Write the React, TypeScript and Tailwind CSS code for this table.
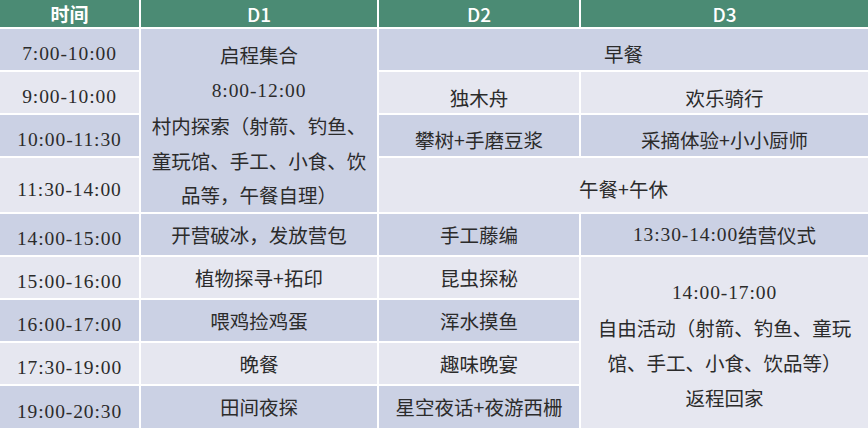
import { type ReactNode } from "react";

/* Camp schedule table — 3 days, time slots down the left */

const CJK = "font-['Noto_Sans_CJK_SC',sans-serif]";
const SERIF = "font-['Liberation_Serif','Noto_Sans_CJK_SC',serif] tracking-[0.9px]";

function Head({ children, bold = false }: { children: ReactNode; bold?: boolean }) {
  return (
    <div
      className={`flex items-center justify-center bg-[#4b8b74] text-white text-[19px] leading-none ${CJK} ${
        bold ? "font-bold" : "font-medium"
      }`}
    >
      {children}
    </div>
  );
}

function Cell({
  children,
  dark,
  className = "pt-[8px]",
  serif = false,
}: {
  children: ReactNode;
  dark: boolean;
  className?: string;
  serif?: boolean;
}) {
  return (
    <div
      className={`flex items-center justify-center text-center text-[19.5px] leading-none text-[#2b2b2b] ${
        dark ? "bg-[#cbd1e4]" : "bg-[#e6e7f0]"
      } ${serif ? SERIF : CJK} ${className}`}
    >
      {children}
    </div>
  );
}

function Time({ children }: { children: ReactNode }) {
  return <span className={SERIF}>{children}</span>;
}

const TIMES = [
  "7:00-10:00",
  "9:00-10:00",
  "10:00-11:30",
  "11:30-14:00",
  "14:00-15:00",
  "15:00-16:00",
  "16:00-17:00",
  "17:30-19:00",
  "19:00-20:30",
];

export default function App() {
  return (
    <div className="w-[868px] h-[428px] overflow-hidden bg-white">
      <div className="grid grid-cols-[139px_236px_200px_287px] grid-rows-[27px_41px_41px_41px_54px_41px_41px_41px_41px_42px] gap-[2px]">
        <Head bold>时间</Head>
        <Head>D1</Head>
        <Head>D2</Head>
        <Head>D3</Head>

        {/* time column */}
        {TIMES.map((t, i) => (
          <Cell key={t} dark={i % 2 === 0} serif className="col-start-1 pt-[9px]">
            {t}
          </Cell>
        ))}

        {/* D1 morning block */}
        <Cell dark className="col-start-2 row-start-2 row-span-4 flex-col !justify-start pt-[8px]">
          <div className="h-[36px] flex items-center">启程集合</div>
          <div className="h-[36px] flex items-center">
            <Time>8:00-12:00</Time>
          </div>
          <div className="h-[34px] flex items-center">村内探索（射箭、钓鱼、</div>
          <div className="h-[36px] flex items-center">童玩馆、手工、小食、饮</div>
          <div className="h-[32px] flex items-center">品等，午餐自理）</div>
        </Cell>

        {/* D2 / D3 morning */}
        <Cell dark className="col-start-3 row-start-2 col-span-2 pt-[9px]">早餐</Cell>
        <Cell dark={false} className="col-start-3 row-start-3 pt-[11px]">独木舟</Cell>
        <Cell dark={false} className="col-start-4 row-start-3 pt-[11px]">欢乐骑行</Cell>
        <Cell dark className="col-start-3 row-start-4 pt-[8px]">攀树+手磨豆浆</Cell>
        <Cell dark className="col-start-4 row-start-4 pt-[8px]">采摘体验+小小厨师</Cell>
        <Cell dark={false} className="col-start-3 row-start-5 col-span-2 pt-[8px]">午餐+午休</Cell>

        {/* afternoon / evening */}
        <Cell dark className="col-start-2 row-start-6">开营破冰，发放营包</Cell>
        <Cell dark className="col-start-3 row-start-6">手工藤编</Cell>
        <Cell dark className="col-start-4 row-start-6">
          <Time>13:30-14:00</Time>结营仪式
        </Cell>

        <Cell dark={false} className="col-start-2 row-start-7">植物探寻+拓印</Cell>
        <Cell dark={false} className="col-start-3 row-start-7">昆虫探秘</Cell>
        <Cell dark={false} className="col-start-4 row-start-7 row-span-4 flex-col pt-[6px]">
          <div className="h-[35px] flex items-center">
            <Time>14:00-17:00</Time>
          </div>
          <div className="h-[35px] flex items-center">自由活动（射箭、钓鱼、童玩</div>
          <div className="h-[35px] flex items-center">馆、手工、小食、饮品等）</div>
          <div className="h-[35px] flex items-center">返程回家</div>
        </Cell>

        <Cell dark className="col-start-2 row-start-8">喂鸡捡鸡蛋</Cell>
        <Cell dark className="col-start-3 row-start-8">浑水摸鱼</Cell>
        <Cell dark={false} className="col-start-2 row-start-9">晚餐</Cell>
        <Cell dark={false} className="col-start-3 row-start-9">趣味晚宴</Cell>
        <Cell dark className="col-start-2 row-start-10">田间夜探</Cell>
        <Cell dark className="col-start-3 row-start-10">星空夜话+夜游西栅</Cell>
      </div>
    </div>
  );
}
